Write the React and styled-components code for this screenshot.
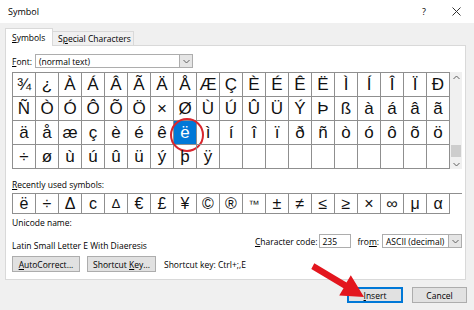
import React from "react";
import styled, { createGlobalStyle, css } from "styled-components";

const GlobalStyle = createGlobalStyle`
  html, body {
    margin: 0;
    padding: 0;
    background: #f0f0f0;
  }
  body {
    font-family: "Open Sans", "Noto Sans", sans-serif;
    font-size: 8.5px;
    color: #000;
  }
`;

const Dialog = styled.div`
  position: relative;
  width: 474px;
  height: 310px;
  background: #f0f0f0;
  display: flex;
  flex-direction: column;
  overflow: hidden;
`;

const TitleBar = styled.div`
  height: 23px;
  background: #fff;
  display: flex;
  align-items: center;
  padding: 0 13px 0 8px;
`;

const Title = styled.div`
  flex: 1;
  font-size: 9px;
`;

const HelpButton = styled.div`
  font-size: 9px;
  margin-right: 26px;
`;

const Body = styled.div`
  padding: 5px 8px 0 5px;
`;

const TabBar = styled.div`
  display: flex;
  align-items: flex-end;
  height: 17px;
  position: relative;
  z-index: 1;
`;

const Tab = styled.div`
  box-sizing: border-box;
  display: flex;
  align-items: center;
  white-space: nowrap;
  border: 1px solid #d9d9d9;
  border-bottom: none;
  ${(p) =>
    p.$active
      ? css`
          height: 18px;
          margin-bottom: -1px;
          padding: 0 6px;
          background: #fff;
          width: 48px;
        `
      : css`
          height: 14px;
          padding: 0 5px;
          background: #f0f0f0;
          border-left: none;
          width: 81px;
        `}
`;

const Panel = styled.div`
  box-sizing: border-box;
  height: 235px;
  background: #fff;
  border: 1px solid #d9d9d9;
  padding: 8px 3px 0 6px;
  display: flex;
  flex-direction: column;
`;

const FontRow = styled.div`
  display: flex;
  align-items: center;
  height: 14px;
`;

const FieldLabel = styled.span`
  width: ${(p) => p.$w || "auto"};
  white-space: nowrap;
`;

const SelectBox = styled.div`
  box-sizing: border-box;
  width: ${(p) => p.$w};
  height: 14px;
  border: 1px solid #adadad;
  background: #fff;
  display: flex;
  align-items: center;
  padding-left: 3px;
  margin-left: ${(p) => p.$ml || 0}px;
`;

const SelectText = styled.span`
  flex: 1;
  white-space: nowrap;
`;

const DropButton = styled.div`
  width: 12px;
  height: 100%;
  background: #e5e5e5;
  border-left: 1px solid #adadad;
  display: flex;
  align-items: center;
  justify-content: center;
`;

const GridWrap = styled.div`
  display: flex;
  margin-top: 4px;
`;

const CharGrid = styled.div`
  display: grid;
  grid-template-columns: repeat(19, 23px);
  grid-auto-rows: ${(p) => p.$row}px;
  border-top: 1px solid #8f8f8f;
  border-left: 1px solid #8f8f8f;
`;

const Cell = styled.div`
  position: relative;
  box-sizing: border-box;
  border-right: 1px solid #8f8f8f;
  border-bottom: 1px solid #8f8f8f;
  display: flex;
  align-items: center;
  justify-content: center;
  font-family: "Liberation Sans", Arial, sans-serif;
  font-size: ${(p) => p.$size || 17}px;
  color: #111;
  ${(p) =>
    p.$selected &&
    css`
      background: #0078d7;
      color: #fff;
      &::after {
        content: "";
        position: absolute;
        left: -4px;
        top: -3px;
        width: 30px;
        height: 30px;
        border: 2px solid #d8262e;
        border-radius: 50%;
      }
    `}
`;

const Scrollbar = styled.div`
  width: 12px;
  height: 97px;
  background: #f0f0f0;
  display: flex;
  flex-direction: column;
  align-items: center;
`;

const ScrollArrow = styled.div`
  height: 10px;
  display: flex;
  align-items: center;
  justify-content: center;
`;

const ScrollTrack = styled.div`
  flex: 1;
  width: 100%;
  display: flex;
  flex-direction: column;
  justify-content: flex-end;
  padding-bottom: 2px;
  box-sizing: border-box;
`;

const Thumb = styled.div`
  height: 12px;
  margin: 0 1px;
  background: #cdcdcd;
`;

const SectionLabel = styled.div`
  line-height: 12px;
  margin-top: ${(p) => p.$mt}px;
`;

const RecentWrap = styled.div`
  margin-top: 2px;
`;

const CodeLine = styled.div`
  display: flex;
  justify-content: space-between;
  align-items: flex-start;
  margin-top: 5px;
`;

const UnicodeName = styled.div`
  line-height: 12px;
  margin-top: 6px;
`;

const CodeRow = styled.div`
  display: flex;
  align-items: center;
  height: 14px;
`;

const TextInput = styled.div`
  box-sizing: border-box;
  width: 32px;
  height: 14px;
  border: 1px solid #adadad;
  padding-left: 2px;
  display: flex;
  align-items: center;
  margin: 0 6px 0 2px;
`;

const ButtonRow = styled.div`
  display: flex;
  align-items: center;
  gap: 7px;
  margin-top: 4px;
`;

const Button = styled.div`
  box-sizing: border-box;
  width: ${(p) => p.$w}px;
  height: 16px;
  background: #e1e1e1;
  border: 1px solid #adadad;
  display: flex;
  align-items: center;
  justify-content: center;
  white-space: nowrap;
  ${(p) =>
    p.$default &&
    css`
      border-color: #0078d7;
      box-shadow: inset 0 0 0 1px #0078d7;
    `}
`;

const ShortcutText = styled.span`
  margin-left: 1px;
`;

const Footer = styled.div`
  display: flex;
  justify-content: flex-end;
  gap: 9px;
  padding: 7px 7px 0 0;
`;

const Arrow = styled.svg`
  position: absolute;
  left: 305px;
  top: 258px;
`;

const Chevron = ({ up, color = "#606060" }) => (
  <svg width="7" height="5" viewBox="0 0 7 5">
    <path
      d={up ? "M0.5 4 L3.5 1 L6.5 4" : "M0.5 1 L3.5 4 L6.5 1"}
      fill="none"
      stroke={color}
      strokeWidth="1"
    />
  </svg>
);

const rows = [
  "¾¿ÀÁÂÃÄÅÆÇÈÉÊËÌÍÎÏÐ",
  "ÑÒÓÔÕÖ×ØÙÚÛÜÝÞßàáâã",
  "äåæçèéêëìíîïðñòóôõö",
  "÷øùúûüýþÿ",
];

const recent = [
  "ë", "÷", "Δ", "с", "∆", "€", "£", "¥", "©", "®",
  "™", "±", "≠", "≤", "≥", "×", "∞", "μ", "α",
];

export default function App() {
  const cells = [];
  rows.forEach((row, r) => {
    const chars = Array.from(row);
    for (let c = 0; c < 19; c++) {
      cells.push(
        <Cell key={`${r}-${c}`} $selected={r === 2 && c === 7}>
          {chars[c] || ""}
        </Cell>
      );
    }
  });

  return (
    <Dialog>
      <GlobalStyle />
      <TitleBar>
        <Title>Symbol</Title>
        <HelpButton>?</HelpButton>
        <svg width="9" height="9" viewBox="0 0 9 9">
          <path d="M0.5 0.5 L8.5 8.5 M8.5 0.5 L0.5 8.5" stroke="#333" strokeWidth="1" />
        </svg>
      </TitleBar>

      <Body>
        <TabBar>
          <Tab $active>
            <span>
              <u>S</u>ymbols
            </span>
          </Tab>
          <Tab>
            <span>
              S<u>p</u>ecial Characters
            </span>
          </Tab>
        </TabBar>

        <Panel>
          <FontRow>
            <FieldLabel $w="23px">
              <u>F</u>ont:
            </FieldLabel>
            <SelectBox $w="158px">
              <SelectText>(normal text)</SelectText>
              <DropButton>
                <Chevron />
              </DropButton>
            </SelectBox>
          </FontRow>

          <GridWrap>
            <CharGrid $row={24}>{cells}</CharGrid>
            <Scrollbar>
              <ScrollArrow>
                <Chevron up />
              </ScrollArrow>
              <ScrollTrack>
                <Thumb />
              </ScrollTrack>
              <ScrollArrow>
                <Chevron />
              </ScrollArrow>
            </Scrollbar>
          </GridWrap>

          <SectionLabel $mt={10}>
            <u>R</u>ecently used symbols:
          </SectionLabel>
          <RecentWrap>
            <CharGrid $row={20}>
              {recent.map((ch, i) => (
                <Cell key={i} $size={ch === "∆" ? 13 : ch === "™" ? 11 : 16}>
                  {ch}
                </Cell>
              ))}
            </CharGrid>
          </RecentWrap>

          <SectionLabel $mt={3}>Unicode name:</SectionLabel>
          <CodeLine>
            <UnicodeName>Latin Small Letter E With Diaeresis</UnicodeName>
            <CodeRow>
              <FieldLabel>
                <u>C</u>haracter code:
              </FieldLabel>
              <TextInput>235</TextInput>
              <FieldLabel>
                fro<u>m</u>:
              </FieldLabel>
              <SelectBox $w="80px" $ml={3}>
                <SelectText>ASCII (decimal)</SelectText>
                <DropButton>
                  <Chevron />
                </DropButton>
              </SelectBox>
            </CodeRow>
          </CodeLine>

          <ButtonRow>
            <Button $w={68}>
              <span>
                <u>A</u>utoCorrect...
              </span>
            </Button>
            <Button $w={69}>
              <span>
                Shortcut <u>K</u>ey...
              </span>
            </Button>
            <ShortcutText>Shortcut key: Ctrl+;,E</ShortcutText>
          </ButtonRow>
        </Panel>
      </Body>

      <Footer>
        <Button $w={56} $default>
          <span>
            <u>I</u>nsert
          </span>
        </Button>
        <Button $w={55}>Cancel</Button>
      </Footer>

      <Arrow width="65" height="45" viewBox="0 0 65 45">
        <polygon
          points="9.3,5.2 41.5,24.5 45.8,17.3 59,39 34.2,37.5 38.5,30.3 6.3,11"
          fill="#e3161e"
        />
      </Arrow>
    </Dialog>
  );
}
